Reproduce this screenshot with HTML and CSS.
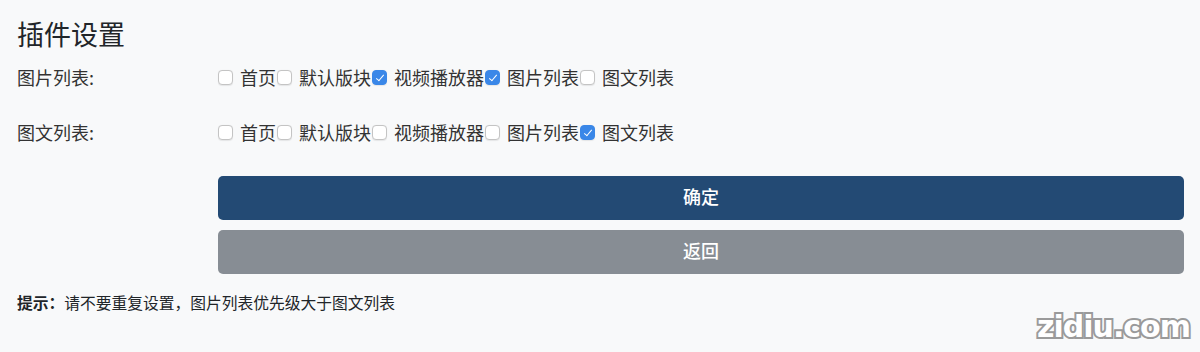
FILE: index.html
```html
<!DOCTYPE html>
<html lang="zh-CN">
<head>
<meta charset="utf-8">
<title>插件设置</title>
<link rel="stylesheet" href="styles.css">
</head>
<body>
<div class="page">
  <h1 class="title">插件设置</h1>
  <div class="row">
    <div class="label">图片列表:</div>
    <div class="options">
      <label class="opt"><span class="box"></span>首页</label>
      <label class="opt"><span class="box"></span>默认版块</label>
      <label class="opt"><span class="box checked"></span>视频播放器</label>
      <label class="opt"><span class="box checked"></span>图片列表</label>
      <label class="opt"><span class="box"></span>图文列表</label>
    </div>
  </div>
  <div class="row">
    <div class="label">图文列表:</div>
    <div class="options">
      <label class="opt"><span class="box"></span>首页</label>
      <label class="opt"><span class="box"></span>默认版块</label>
      <label class="opt"><span class="box"></span>视频播放器</label>
      <label class="opt"><span class="box"></span>图片列表</label>
      <label class="opt"><span class="box checked"></span>图文列表</label>
    </div>
  </div>
  <div class="actions">
    <button class="btn btn-primary">确定</button>
    <button class="btn btn-secondary">返回</button>
  </div>
  <p class="tip"><strong>提示：</strong>请不要重复设置，图片列表优先级大于图文列表</p>
</div>
<div class="watermark">zidiu.com</div>
</body>
</html>
```

FILE: styles.css
```css
html, body {
  margin: 0;
  padding: 0;
  background: #f8f9fa;
}
body {
  font-family: "Noto Sans CJK SC", "Noto Sans", sans-serif;
  color: #212529;
  height: 352px;
  overflow: hidden;
  position: relative;
}
.page {
  padding: 0 16px 0 17px;
}
.title {
  margin: 0;
  padding-top: 16px;
  font-size: 27px;
  font-weight: 400;
  line-height: 36px;
}
.row {
  display: grid;
  grid-template-columns: 201px 1fr;
  align-items: center;
  font-size: 18px;
  line-height: 27px;
  margin-top: 12px;
}
.row + .row {
  margin-top: 28px;
}
.label {
  color: #333;
}
.options {
  display: flex;
  align-items: center;
  color: #333;
}
.opt {
  display: flex;
  align-items: center;
  margin-right: 1px;
}
.box {
  width: 13px;
  height: 13px;
  border: 1px solid #c4c4c4;
  border-radius: 4px;
  background: #fff;
  margin-right: 7px;
  position: relative;
  box-sizing: content-box;
  box-shadow: 0 0.5px 1px rgba(0, 0, 0, 0.08);
}
.box.checked {
  background: #3a87e8;
  border-color: #3a87e8;
}
.box.checked::after {
  content: "";
  position: absolute;
  left: 4.5px;
  top: 1.5px;
  width: 3px;
  height: 7px;
  border: solid #fff;
  border-width: 0 1.5px 1.5px 0;
  transform: rotate(40deg);
}
.actions {
  margin-left: 201px;
  margin-top: 30px;
  display: flex;
  flex-direction: column;
  gap: 10px;
}
.btn {
  display: block;
  width: 100%;
  height: 44px;
  border: none;
  border-radius: 5px;
  color: #fff;
  font-family: "Noto Sans CJK SC", "Noto Sans", sans-serif;
  font-size: 18px;
  font-weight: 500;
  line-height: 40px;
  padding: 0 0 4px;
}
.btn-primary {
  background: #234a74;
}
.btn-secondary {
  background: #878d94;
}
.tip {
  margin: 17px 0 0;
  font-size: 15.75px;
  line-height: 24px;
  color: #212529;
}
.tip strong {
  font-weight: 700;
}
.watermark {
  position: absolute;
  right: 10px;
  bottom: 8px;
  font-family: "DejaVu Sans", sans-serif;
  font-weight: 700;
  font-size: 30px;
  color: #fff;
  -webkit-text-stroke: 4px #9a9a9a;
  paint-order: stroke fill;
  letter-spacing: -1px;
}
```
